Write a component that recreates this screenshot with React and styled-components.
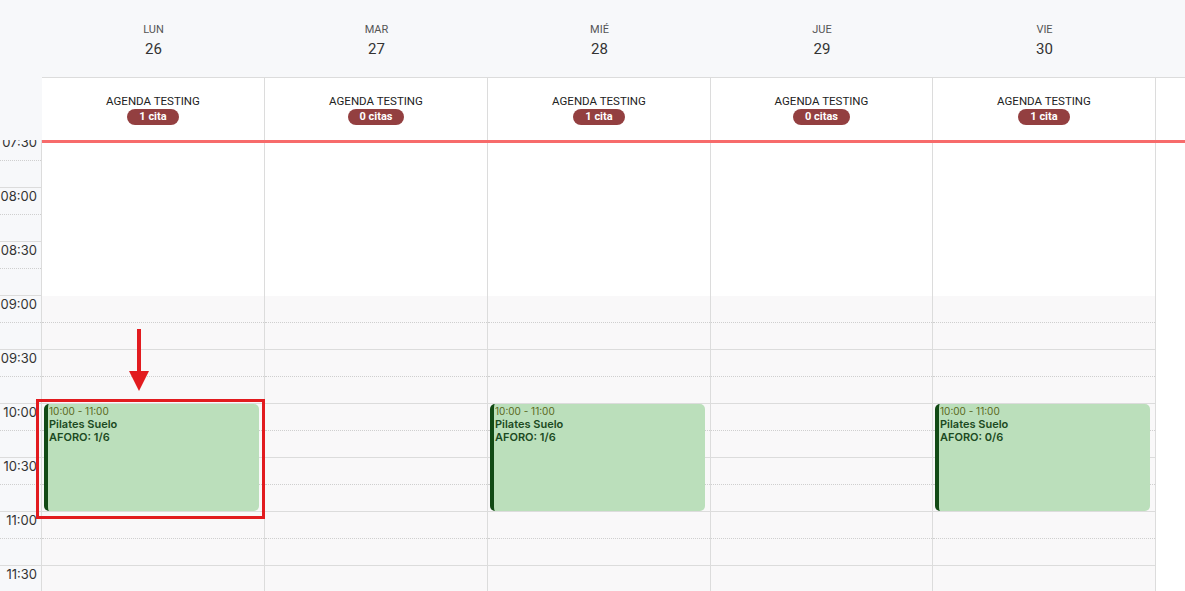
import React from 'react';
import styled, { createGlobalStyle } from 'styled-components';

const GlobalStyle = createGlobalStyle`
  html, body {
    margin: 0;
    padding: 0;
    background: #fff;
  }
  body {
    font-family: Roboto, "Liberation Sans", sans-serif;
    overflow: hidden;
  }
`;

const COLS = '223px 223px 223px 222px 223px 1fr';
const SLOT = 27;

const days = [
  { name: 'LUN', num: 26, citas: '1 cita', aforo: '1/6' },
  { name: 'MAR', num: 27, citas: '0 citas' },
  { name: 'MIÉ', num: 28, citas: '1 cita', aforo: '1/6' },
  { name: 'JUE', num: 29, citas: '0 citas' },
  { name: 'VIE', num: 30, citas: '1 cita', aforo: '0/6' },
];

// 15 minute slots starting at 07:30
const slots = Array.from({ length: 18 }, (_, i) => {
  const mins = 7 * 60 + 30 + i * 15;
  const h = String(Math.floor(mins / 60)).padStart(2, '0');
  const m = String(mins % 60).padStart(2, '0');
  return { i, label: `${h}:${m}`, half: i % 2 === 0, closed: mins < 9 * 60 };
});

const Page = styled.div`
  position: relative;
  width: 1185px;
  height: 591px;
  overflow: hidden;
  background: #fff;
`;

const Header = styled.div`
  display: grid;
  grid-template-columns: 42px 1fr;
  height: 140px;
`;

const Corner = styled.div`
  background: #f7f8fa;
`;

const HeadMain = styled.div`
  display: flex;
  flex-direction: column;
`;

const DayRow = styled.div`
  display: grid;
  grid-template-columns: ${COLS};
  height: 77px;
  background: #f7f8fa;
  border-bottom: 1px solid #dcdcdc;
`;

const DayCell = styled.div`
  display: flex;
  flex-direction: column;
  align-items: center;
  padding-top: 23px;
`;

const DayName = styled.div`
  font-size: 11px;
  line-height: 14px;
  color: #555;
`;

const DayNum = styled.div`
  margin-top: 3px;
  font-size: 15px;
  line-height: 18px;
  color: #333;
`;

const ResourceRow = styled.div`
  display: grid;
  grid-template-columns: ${COLS};
  height: 62px;
  background: #fff;
`;

const ResourceCell = styled.div`
  display: flex;
  flex-direction: column;
  align-items: center;
  padding-top: 16px;
  border-right: ${(p) => (p.$last ? 'none' : '1px solid #dcdcdc')};
`;

const ResourceName = styled.div`
  font-size: 11.5px;
  line-height: 15px;
  color: #222;
  text-transform: uppercase;
`;

const Badge = styled.span`
  height: 16px;
  padding: 0 12px;
  border-radius: 8px;
  background: #933f40;
  color: #fff;
  font-size: 11px;
  font-weight: 700;
  line-height: 16px;
`;

const Body = styled.div`
  position: relative;
  height: 451px;
  overflow: hidden;
`;

const BodyGrid = styled.div`
  display: grid;
  grid-template-columns: 42px ${COLS};
  margin-top: -6px;
`;

const Gutter = styled.div`
  background: #f7f8fa;
  border-right: 1px solid #dcdcdc;
`;

const DayColumn = styled.div`
  position: relative;
  border-right: ${(p) => (p.$last ? 'none' : '1px solid #dcdcdc')};
`;

const Slot = styled.div`
  box-sizing: border-box;
  height: ${SLOT}px;
  background: ${(p) => (p.$closed ? '#fff' : p.$gutter ? '#f7f8fa' : '#f9f8f9')};
  border-bottom: 1px ${(p) => (p.$half ? 'dotted' : 'solid')}
    ${(p) => (p.$closed ? '#fff' : p.$half ? '#cfcfcf' : '#dcdcdc')};
`;

const TimeLabel = styled.div`
  padding: 1px 4px 0 0;
  text-align: right;
  font-family: Inter, "Liberation Sans", sans-serif;
  font-size: 13px;
  line-height: 14px;
  color: #333;
`;

const Filler = styled.div`
  background: #fff;
`;

const NowLine = styled.div`
  position: absolute;
  top: 0;
  left: 42px;
  right: 0;
  height: 3px;
  background: #f76b6b;
`;

const Event = styled.div`
  position: absolute;
  top: ${SLOT * 10}px;
  left: 2px;
  width: 215px;
  height: 107px;
  box-sizing: border-box;
  padding: 1px 0 0 1px;
  background: #bbdfbb;
  border-left: 4px solid #124a15;
  border-radius: 5px;
  font-family: Inter, "Liberation Sans", sans-serif;
`;

const EventTime = styled.div`
  font-size: 10px;
  line-height: 13px;
  color: #5a691c;
`;

const EventText = styled.div`
  font-size: 11px;
  font-weight: 600;
  line-height: 13px;
  color: #1b4a22;
`;

const Highlight = styled.div`
  position: absolute;
  left: 36px;
  top: 399px;
  width: 229px;
  height: 120px;
  box-sizing: border-box;
  border: 3px solid #e21b1f;
`;

const Arrow = styled.svg`
  position: absolute;
  left: 128px;
  top: 329px;
`;

export default function App() {
  return (
    <Page>
      <GlobalStyle />
      <Header>
        <Corner />
        <HeadMain>
          <DayRow>
            {days.map((d) => (
              <DayCell key={d.name}>
                <DayName>{d.name}</DayName>
                <DayNum>{d.num}</DayNum>
              </DayCell>
            ))}
            <div />
          </DayRow>
          <ResourceRow>
            {days.map((d) => (
              <ResourceCell key={d.name}>
                <ResourceName>Agenda Testing</ResourceName>
                <Badge>{d.citas}</Badge>
              </ResourceCell>
            ))}
            <ResourceCell $last />
          </ResourceRow>
        </HeadMain>
      </Header>

      <Body>
        <BodyGrid>
          <Gutter>
            {slots.map((s) => (
              <Slot key={s.i} $gutter $half={s.half}>
                {s.half && <TimeLabel>{s.label}</TimeLabel>}
              </Slot>
            ))}
          </Gutter>
          {days.map((d) => (
            <DayColumn key={d.name}>
              {slots.map((s) => (
                <Slot key={s.i} $half={s.half} $closed={s.closed} />
              ))}
              {d.aforo && (
                <Event>
                  <EventTime>10:00 - 11:00</EventTime>
                  <EventText>Pilates Suelo</EventText>
                  <EventText>AFORO: {d.aforo}</EventText>
                </Event>
              )}
            </DayColumn>
          ))}
          <Filler />
        </BodyGrid>
        <NowLine />
      </Body>

      <Highlight />
      <Arrow width="22" height="62" viewBox="0 0 22 62">
        <rect x="9" y="0" width="4" height="44" fill="#e21b1f" />
        <polygon points="1,42 21,42 11,62" fill="#e21b1f" />
      </Arrow>
    </Page>
  );
}
